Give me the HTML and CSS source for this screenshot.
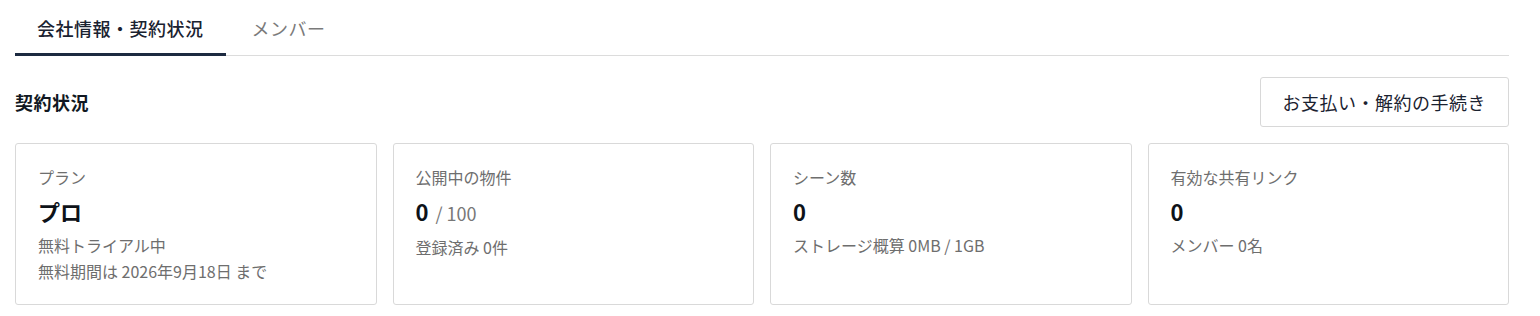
FILE: index.html
```html
<!DOCTYPE html>
<html lang="ja">
<head>
<meta charset="utf-8">
<link rel="stylesheet" href="styles.css">
</head>
<body>
<div class="page">
  <nav class="tabs">
    <div class="tab active">会社情報・契約状況</div>
    <div class="tab">メンバー</div>
  </nav>
  <div class="head">
    <h2 class="title">契約状況</h2>
    <button class="btn">お支払い・解約の手続き</button>
  </div>
  <div class="cards">
    <div class="card">
      <div class="label">プラン</div>
      <div class="value">プロ</div>
      <div class="sub">無料トライアル中</div>
      <div class="sub">無料期間は 2026年9月18日 まで</div>
    </div>
    <div class="card">
      <div class="label">公開中の物件</div>
      <div class="value">0 <span class="of">/ 100</span></div>
      <div class="sub">登録済み 0件</div>
    </div>
    <div class="card">
      <div class="label">シーン数</div>
      <div class="value">0</div>
      <div class="sub">ストレージ概算 0MB / 1GB</div>
    </div>
    <div class="card">
      <div class="label">有効な共有リンク</div>
      <div class="value">0</div>
      <div class="sub">メンバー 0名</div>
    </div>
  </div>
</div>
</body>
</html>
```

FILE: styles.css
```css
* { box-sizing: border-box; }
html, body { margin: 0; padding: 0; background: #fff; }
body {
  font-family: "Noto Sans CJK JP", "Noto Sans", sans-serif;
  color: #1a2230;
}
.page {
  padding: 0 31px 0 15px;
}
.tabs {
  display: flex;
  gap: 4px;
  border-bottom: 1px solid #dcdcdc;
  height: 56px;
}
.tab {
  padding: 15px 22px 0;
  font-size: 18px;
  line-height: 26px;
  letter-spacing: 0.5px;
  color: #7a7a7a;
  border-bottom: 3px solid transparent;
  margin-bottom: -1px;
}
.tab.active {
  color: #1a2230;
  font-weight: 500;
  border-bottom-color: #1c2a40;
}
.head {
  display: flex;
  justify-content: space-between;
  align-items: center;
  margin-top: 21px;
  height: 50px;
}
.title {
  margin: 0;
  font-size: 18px;
  font-weight: 700;
  letter-spacing: 0.5px;
  color: #111822;
}
.btn {
  height: 50px;
  padding: 0 22px;
  font-family: inherit;
  font-size: 18px;
  letter-spacing: 0.5px;
  color: #1a2230;
  background: #fff;
  border: 1px solid #d8d8d8;
  border-radius: 3px;
}
.cards {
  display: grid;
  grid-template-columns: repeat(4, 1fr);
  gap: 16px;
  margin-top: 16px;
}
.card {
  border: 1px solid #d9d9d9;
  border-radius: 3px;
  padding: 23px 22px 18px;
  height: 162px;
}
.label {
  font-size: 16px;
  line-height: 20px;
  color: #6e6e6e;
}
.value {
  margin-top: 10px;
  font-size: 22px;
  line-height: 28px;
  font-weight: 700;
  color: #0d1218;
}
.of {
  font-size: 18px;
  font-weight: 400;
  color: #777;
  margin-left: 2px;
}
.sub {
  font-size: 16px;
  line-height: 26px;
  color: #6e6e6e;
}
.value + .sub { margin-top: 7px; }
```
